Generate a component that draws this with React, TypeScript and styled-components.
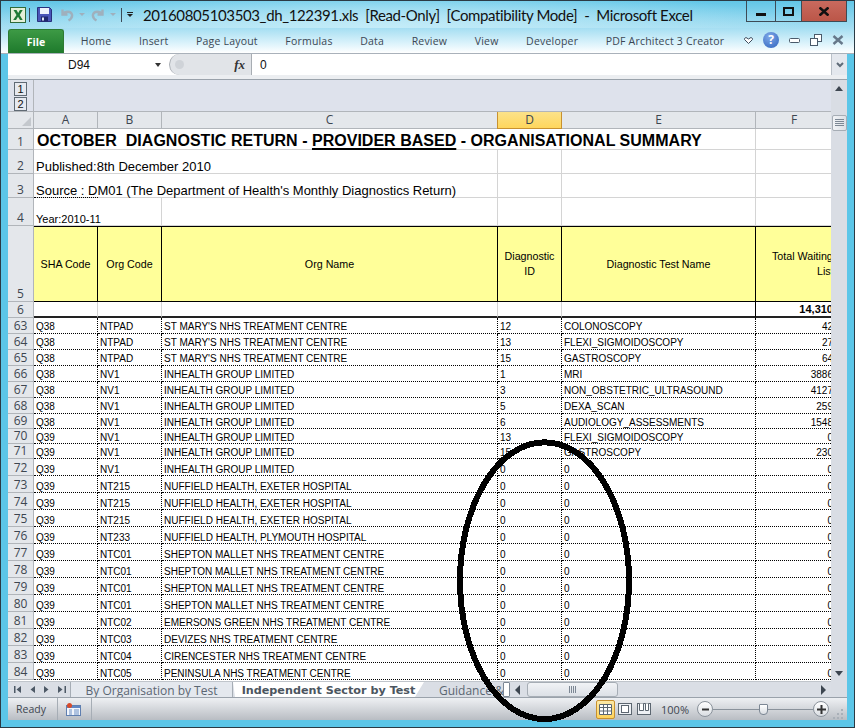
import styled, { createGlobalStyle } from 'styled-components'

type Row = [number, string, string, string, string, string, string]

const NTPAD = "ST MARY'S NHS TREATMENT CENTRE"
const NV1 = 'INHEALTH GROUP LIMITED'
const EXETER = 'NUFFIELD HEALTH, EXETER HOSPITAL'
const SHEPTON = 'SHEPTON MALLET NHS TREATMENT CENTRE'

const rows: Row[] = [
  [63, 'Q38', 'NTPAD', NTPAD, '12', 'COLONOSCOPY', '42'],
  [64, 'Q38', 'NTPAD', NTPAD, '13', 'FLEXI_SIGMOIDOSCOPY', '27'],
  [65, 'Q38', 'NTPAD', NTPAD, '15', 'GASTROSCOPY', '64'],
  [66, 'Q38', 'NV1', NV1, '1', 'MRI', '3886'],
  [67, 'Q38', 'NV1', NV1, '3', 'NON_OBSTETRIC_ULTRASOUND', '4127'],
  [68, 'Q38', 'NV1', NV1, '5', 'DEXA_SCAN', '259'],
  [69, 'Q38', 'NV1', NV1, '6', 'AUDIOLOGY_ASSESSMENTS', '1548'],
  [70, 'Q39', 'NV1', NV1, '13', 'FLEXI_SIGMOIDOSCOPY', '0'],
  [71, 'Q39', 'NV1', NV1, '15', 'GASTROSCOPY', '230'],
  [72, 'Q39', 'NV1', NV1, '0', '0', '0'],
  [73, 'Q39', 'NT215', EXETER, '0', '0', '0'],
  [74, 'Q39', 'NT215', EXETER, '0', '0', '0'],
  [75, 'Q39', 'NT215', EXETER, '0', '0', '0'],
  [76, 'Q39', 'NT233', 'NUFFIELD HEALTH, PLYMOUTH HOSPITAL', '0', '0', '0'],
  [77, 'Q39', 'NTC01', SHEPTON, '0', '0', '0'],
  [78, 'Q39', 'NTC01', SHEPTON, '0', '0', '0'],
  [79, 'Q39', 'NTC01', SHEPTON, '0', '0', '0'],
  [80, 'Q39', 'NTC01', SHEPTON, '0', '0', '0'],
  [81, 'Q39', 'NTC02', 'EMERSONS GREEN NHS TREATMENT CENTRE', '0', '0', '0'],
  [82, 'Q39', 'NTC03', 'DEVIZES NHS TREATMENT CENTRE', '0', '0', '0'],
  [83, 'Q39', 'NTC04', 'CIRENCESTER NHS TREATMENT CENTRE', '0', '0', '0'],
  [84, 'Q39', 'NTC05', 'PENINSULA NHS TREATMENT CENTRE', '0', '0', '0'],
]

const tabs = ['Home', 'Insert', 'Page Layout', 'Formulas', 'Data', 'Review', 'View', 'Developer', 'PDF Architect 3 Creator']

// rows are not all the same height in the sheet
const rowHeight = (num: number) => (num >= 72 ? 17 : num >= 69 ? 15 : 16)

export default function App() {
  return (
    <Window>
      <GlobalStyle />
      <TitleBar>
        <svg width="16" height="16" viewBox="0 0 16 16">
          <rect x="0.5" y="0.5" width="15" height="15" fill="#e4efd8" stroke="#2f6b3a" />
          <path d="M3.500 3h3l1.700 3 1.700-3h2.800l-3 5 3 5H10L8 9.800 6 13H3.200l3.300-5z" fill="#1f7a35" />
        </svg>
        <FirstSep />
        <SaveIcon width="15" height="15" viewBox="0 0 15 15">
          <path d="M.5.500h12l2 2v12H.5z" fill="#4a55b8" stroke="#27307c" />
          <rect x="3" y="1" width="9" height="6" fill="#eef2fb" />
          <rect x="4" y="9.500" width="7" height="5" fill="#20286e" />
          <rect x="5" y="10.500" width="2" height="3" fill="#dfe5f5" />
        </SaveIcon>
        <QuickIcon $first>
          <svg width="14" height="14" viewBox="0 0 14 14" fill="none" stroke="#9fb0bd" strokeWidth="2.400">
            <path d="M2.500 1.500v5h5M3 6.500C5 2.500 11 3 12 6.500c.5 2.500-1 4.500-3.500 6" />
          </svg>
          <Caret />
        </QuickIcon>
        <QuickIcon>
          <svg width="14" height="14" viewBox="0 0 14 14" fill="none" stroke="#9fb0bd" strokeWidth="2.400">
            <path d="M11.500 1.500v5h-5M11 6.500C9 2.500 3 3 2 6.500c-.5 2.500 1 4.500 3.500 6" />
          </svg>
          <Caret />
        </QuickIcon>
        <SecondSep />
        <CustomizeCaret />
        <TitleText>20160805103503_dh_122391.xls&nbsp; [Read-Only]&nbsp; [Compatibility Mode]&nbsp; -&nbsp; Microsoft Excel</TitleText>
        <Controls>
          <MinButton>
            <MinBar />
          </MinButton>
          <MaxButton>
            <svg width="11" height="9" viewBox="0 0 11 9" fill="none" stroke="#111" strokeWidth="2"><path d="M1 1h9v7H1z" /></svg>
          </MaxButton>
          <CloseButton>
            <svg width="10" height="9" viewBox="0 0 10 9" stroke="#111" strokeWidth="2.600"><path d="M.5.500l9 8M9.500.500l-9 8" /></svg>
          </CloseButton>
        </Controls>
      </TitleBar>

      <RibbonTabs>
        <FileTab>File</FileTab>
        {tabs.map((t) => (
          <RibbonTab key={t}>{t}</RibbonTab>
        ))}
        <RibbonTools>
          <svg width="9" height="7" viewBox="0 0 9 7" fill="#fff" stroke="#3d4b5c">
            <path d="M.5 1.500L2 .5l2.500 1.500L7 .5l1.500 1v1L4.500 6.500.5 2.500z" />
          </svg>
          <HelpIcon>?</HelpIcon>
          <svg width="11" height="5" viewBox="0 0 11 5"><rect x=".5" y=".5" width="10" height="4" rx="1" fill="#fff" stroke="#4b5a6a" /></svg>
          <svg width="12" height="12" viewBox="0 0 12 12" fill="#fff" stroke="#4b5a6a">
            <rect x="4.500" y=".5" width="7" height="7" />
            <rect x=".5" y="4.500" width="7" height="7" />
          </svg>
          <svg width="12" height="10" viewBox="0 0 12 10" fill="none" stroke="#66788a" strokeWidth="2.400"><path d="M1.500 1l9 8M10.500 1l-9 8" /></svg>
        </RibbonTools>
      </RibbonTabs>

      <FormulaBar>
        <NameBox>
          <NameValue>D94</NameValue>
          <DownCaret />
        </NameBox>
        <FxArea>
          <FxKnob />
          <FxLabel>fx</FxLabel>
        </FxArea>
        <FormulaValue>0</FormulaValue>
        <FormulaExpand>
          <svg width="8" height="6" viewBox="0 0 8 6" fill="none" stroke="#5f6b78" strokeWidth="2"><path d="M1 1l3 3 3-3" /></svg>
        </FormulaExpand>
      </FormulaBar>

      <Workbook>
        <SheetArea>
          <OutlineBar>
            <OutlineNums>
              <OutlineNum>1</OutlineNum>
              <OutlineNum>2</OutlineNum>
            </OutlineNums>
          </OutlineBar>
          <Sheet>
            <Corner />
            <ColHead>A</ColHead>
            <ColHead>B</ColHead>
            <ColHead>C</ColHead>
            <ColHead $active>D</ColHead>
            <ColHead>E</ColHead>
            <ColHead>F</ColHead>

            <RowNum $h={21}>1</RowNum>
            <TitleCell>
              OCTOBER&nbsp; DIAGNOSTIC RETURN - <u>PROVIDER BASED</u> - ORGANISATIONAL SUMMARY
            </TitleCell>
            <Cell />

            <RowNum $h={24}>2</RowNum>
            <SpanCell>Published:8th December 2010</SpanCell>
            <Cell />
            <Cell />
            <Cell />

            <RowNum $h={24}>3</RowNum>
            <SpanCell $dotted>Source : DM01 (The Department of Health's Monthly Diagnostics Return)</SpanCell>
            <Cell />
            <Cell />
            <Cell />

            <RowNum $h={28}>4</RowNum>
            <YearCell>Year:2010-11</YearCell>
            <Cell />
            <Cell />
            <Cell />
            <Cell />

            <RowNum $h={76}>5</RowNum>
            <HeadCell>SHA Code</HeadCell>
            <HeadCell>Org Code</HeadCell>
            <HeadCell>Org Name</HeadCell>
            <HeadCell>Diagnostic<br />ID</HeadCell>
            <HeadCell>Diagnostic Test Name</HeadCell>
            <WideHeadCell>
              <div>
                Total Waiting
                <ListLine>List</ListLine>
              </div>
            </WideHeadCell>

            <RowNum $h={16}>6</RowNum>
            <TotalBlank />
            <TotalBlank />
            <TotalBlank />
            <TotalBlank />
            <TotalBlank />
            <TotalCell>14,310</TotalCell>

            {rows.map((r) => (
              <DataRow key={r[0]} row={r} />
            ))}
          </Sheet>
          <TabStrip>
            <TabNav>
              <svg width="52" height="9" viewBox="0 0 52 9" fill="#4d5966">
                <path d="M0 1h1.500v7H0zM7 1v7L2.500 4.500zM21 1v7l-4.500-3.500zM30 1v7l4.500-3.500zM52 1h-1.500v7H52zM44 1v7l4.500-3.500z" />
              </svg>
            </TabNav>
            <SheetTab>By Organisation by Test</SheetTab>
            <ActiveSheetTab>Independent Sector by Test</ActiveSheetTab>
            <GuidanceTab>Guidance &amp; N</GuidanceTab>
            <TabSplit />
            <HScroll>
              <ScrollArrow $dir="left" />
              <HThumb>
                <svg width="8" height="7" viewBox="0 0 8 7" stroke="#7c8794"><path d="M.5 0v7M2.500 0v7M4.500 0v7M6.500 0v7" /></svg>
              </HThumb>
              <ScrollArrow $dir="right" />
            </HScroll>
          </TabStrip>
        </SheetArea>
        <VScroll>
          <VArrow $up />
          <VThumb>
            <svg width="9" height="8" viewBox="0 0 9 8" stroke="#7c8794"><path d="M0 .5h9M0 2.500h9M0 4.500h9M0 6.500h9" /></svg>
          </VThumb>
          <VArrow />
        </VScroll>
      </Workbook>

      <StatusBar>
        <StatusText>Ready</StatusText>
        <StatusSep />
        <svg width="15" height="13" viewBox="0 0 15 13">
          <rect x=".5" y="2.500" width="14" height="10" fill="#f2f6fc" stroke="#5f7fb0" />
          <rect x="1" y="3" width="13" height="2" fill="#5f86c4" />
          <path d="M3 7h3M8 7h5M3 9h3M8 9h5M3 11h3M8 11h5" stroke="#6a8fc4" />
          <circle cx="3.500" cy="2.500" r="2.500" fill="#d84a2a" />
        </svg>
        <StatusSepRight />
        <StatusRight>
          <ViewActive>
            <svg width="13" height="11" viewBox="0 0 13 11" fill="#fff" stroke="#5c6670">
              <path d="M.5.500h12v10H.5zM.5 3.500h12M.5 7h12M4.500.500v10M8.500.500v10" />
            </svg>
          </ViewActive>
          <ViewIcon>
            <svg width="14" height="12" viewBox="0 0 14 12" fill="#eef1f5" stroke="#5c6670">
              <rect x=".5" y=".5" width="13" height="11" />
              <rect x="3.500" y="2.500" width="7" height="7" fill="#fff" />
            </svg>
          </ViewIcon>
          <ViewIcon>
            <svg width="14" height="12" viewBox="0 0 14 12" fill="#eef1f5" stroke="#5c6670">
              <rect x=".5" y=".5" width="13" height="11" />
              <path d="M2.500.500v7h4v-7M8.500.500v7h3v-7" fill="#fff" />
            </svg>
          </ViewIcon>
          <ZoomText>100%</ZoomText>
          <ZoomButton>
            <svg width="9" height="9" viewBox="0 0 9 9" stroke="#333" strokeWidth="2"><path d="M1 4.500h7" /></svg>
          </ZoomButton>
          <SliderTrack>
            <SliderThumb />
          </SliderTrack>
          <ZoomButton>
            <svg width="9" height="9" viewBox="0 0 9 9" stroke="#333" strokeWidth="2"><path d="M0 4.500h9M4.500 0v9" /></svg>
          </ZoomButton>
          <Grip>
            <svg width="12" height="12" viewBox="0 0 12 12" fill="#a9b0b8">
              <path d="M9 1h2v2H9zM5 5h2v2H5zM9 5h2v2H9zM1 9h2v2H1zM5 9h2v2H5zM9 9h2v2H9z" />
            </svg>
          </Grip>
        </StatusRight>
      </StatusBar>

      <Ellipse width="182" height="286" viewBox="0 0 182 286" shapeRendering="crispEdges">
        <ellipse cx="90.500" cy="141.700" rx="84.500" ry="138.400" fill="none" stroke="#000" strokeWidth="6" />
      </Ellipse>
    </Window>
  )
}

function DataRow({ row }: { row: Row }) {
  const [num, sha, org, name, id, test, total] = row
  const h = rowHeight(num)
  return (
    <>
      <RowNum $h={h}>{num}</RowNum>
      <DataCell $h={h}>{sha}</DataCell>
      <DataCell $h={h}>{org}</DataCell>
      <DataCell $h={h}>{name}</DataCell>
      <DataCell $h={h}>{id}</DataCell>
      <DataCell $h={h}>{test}</DataCell>
      <TotalValue $h={h}>{total}</TotalValue>
    </>
  )
}

const GlobalStyle = createGlobalStyle`
  html, body {
    margin: 0;
    padding: 0;
    background: #5cc6e8;
  }
  * {
    box-sizing: border-box;
  }
`

const Window = styled.div`
  position: relative;
  width: 855px;
  height: 728px;
  overflow: hidden;
  border: 1px solid #2b3a44;
  display: flex;
  flex-direction: column;
  font-family: 'Open Sans', sans-serif;
  background: #5cc6e8;
`

const TitleBar = styled.div`
  height: 27px;
  flex: none;
  display: flex;
  align-items: center;
  padding-left: 9px;
  background: radial-gradient(ellipse 420px 40px at 45% 100%, #c4ecf8, transparent), linear-gradient(180deg, #62c6e7, #a5def2);
`

const FirstSep = styled.div`
  width: 1px;
  height: 14px;
  background: #3c4a56;
  margin-left: 3px;
`

const SaveIcon = styled.svg`
  margin-left: 7px;
`

const QuickIcon = styled.div<{ $first?: boolean }>`
  display: flex;
  align-items: center;
  gap: 5px;
  margin-left: ${(p) => (p.$first ? '8px' : '6px')};
`

const Caret = styled.div`
  width: 0;
  height: 0;
  border: 3px solid transparent;
  border-top: 3px solid #9fb0bd;
  border-bottom: 0;
`

const SecondSep = styled(FirstSep)`
  margin-left: 5px;
`

const CustomizeCaret = styled.div`
  width: 6px;
  height: 5px;
  margin-left: 5px;
  border-top: 1px solid #222;
  position: relative;
  &::after {
    content: '';
    position: absolute;
    top: 1px;
    left: 0;
    border: 3px solid transparent;
    border-top: 3px solid #222;
    border-bottom: 0;
  }
`

const TitleText = styled.div`
  font-family: 'Lato', sans-serif;
  font-size: 15px;
  letter-spacing: -0.37px;
  color: #111;
  white-space: nowrap;
  margin-left: 10px;
`

const Controls = styled.div`
  position: absolute;
  top: 0;
  right: 7px;
  display: flex;
`

const ControlButton = styled.div`
  height: 21px;
  border: 1px solid #3d4a55;
  border-top: 0;
  margin-right: -1px;
  display: flex;
  align-items: center;
  justify-content: center;
`

const MinButton = styled(ControlButton)`
  width: 30px;
`

const MinBar = styled.div`
  width: 10px;
  height: 3px;
  margin-top: 6px;
  background: #111;
`

const MaxButton = styled(ControlButton)`
  width: 27px;
`

const CloseButton = styled(ControlButton)`
  width: 46px;
  margin-right: 0;
  background: linear-gradient(180deg, #c96a5e, #bb5648);
`

const RibbonTabs = styled.div`
  height: 26px;
  flex: none;
  display: flex;
  align-items: stretch;
  padding: 0 0 1px 7px;
  position: relative;
  background: linear-gradient(180deg, #a5def2, #dcf3fb 60%, #fff 96%, #a9b1ba 96%);
`

const FileTab = styled.div`
  width: 56px;
  margin: 1px 3px 0 0;
  border: 1px solid #2d7a32;
  border-bottom: 0;
  border-radius: 3px 3px 0 0;
  background: linear-gradient(180deg, #3d9a45, #1e7a2c);
  color: #fff;
  font-size: 10.500px;
  font-weight: 700;
  display: flex;
  align-items: center;
  justify-content: center;
`

const RibbonTab = styled.div`
  padding: 0 13.800px;
  font-size: 10.500px;
  letter-spacing: 0.2px;
  color: #3b4754;
  display: flex;
  align-items: center;
  white-space: nowrap;
`

const RibbonTools = styled.div`
  position: absolute;
  right: 10px;
  top: 4px;
  height: 16px;
  display: flex;
  align-items: center;
  gap: 10px;
`

const HelpIcon = styled.div`
  width: 16px;
  height: 16px;
  border-radius: 50%;
  background: radial-gradient(circle at 40% 30%, #7fa9e8, #2d62bd);
  color: #fff;
  font-size: 12px;
  font-weight: 700;
  text-align: center;
  line-height: 16px;
`

const FormulaBar = styled.div`
  height: 25px;
  flex: none;
  margin: 0 7px;
  background: #fff;
  display: flex;
  align-items: stretch;
  font-size: 12px;
  border-bottom: 4px solid #eceef1;
  font-family: 'Liberation Sans', sans-serif;
`

const NameBox = styled.div`
  width: 161px;
  display: flex;
  align-items: center;
  justify-content: center;
  position: relative;
`

const NameValue = styled.span`
  margin-left: -19px;
  color: #111;
`

const DownCaret = styled.div`
  position: absolute;
  right: 8px;
  top: 9px;
  border: 3.500px solid transparent;
  border-top: 4px solid #333;
  border-bottom: 0;
`

const FxArea = styled.div`
  width: 83px;
  display: flex;
  align-items: center;
  justify-content: flex-end;
  padding-right: 6px;
  background: #e1e4e8;
  border-radius: 11px 0 0 11px;
  border-left: 1px solid #a8adb3;
  border-right: 1px solid #a8adb3;
  position: relative;
`

const FxKnob = styled.div`
  position: absolute;
  left: 5px;
  top: 6px;
  width: 9px;
  height: 9px;
  border-radius: 50%;
  background: #cfd3d8;
`

const FxLabel = styled.span`
  font-family: 'Liberation Serif', serif;
  font-style: italic;
  font-weight: 700;
  font-size: 13px;
  color: #333;
`

const FormulaValue = styled.div`
  flex: 1;
  padding-left: 8px;
  display: flex;
  align-items: center;
  color: #111;
`

const FormulaExpand = styled.div`
  width: 16px;
  background: #e4e8ee;
  border-left: 1px solid #b9c0c8;
  display: flex;
  align-items: center;
  justify-content: center;
`

const Workbook = styled.div`
  flex: 1;
  min-height: 0;
  margin: 0 7px;
  border-top: 1px solid #9aa2ab;
  display: flex;
`

const SheetArea = styled.div`
  width: 823px;
  flex: none;
  display: flex;
  flex-direction: column;
  min-height: 0;
`

const OutlineBar = styled.div`
  height: 32px;
  flex: none;
  background: #dee2ec;
  display: flex;
  border-bottom: 1px solid #b1b5ba;
`

const OutlineNums = styled.div`
  width: 26px;
  border-right: 1px solid #b1b5ba;
  background: #dee2ec;
  padding: 2px 6px 0 6px;
`

const OutlineNum = styled.div`
  height: 14px;
  border: 1px solid #606a74;
  font: 11px/12px 'Liberation Sans', sans-serif;
  color: #111;
  text-align: center;
  background: #e6e9f0;
  & + & {
    margin-top: 1px;
  }
`

const Sheet = styled.div`
  flex: 1;
  min-height: 0;
  overflow: hidden;
  display: grid;
  grid-template-columns: 26px 64px 64px 336px 64px 194px 77px;
  grid-auto-rows: max-content;
  font-family: 'Liberation Sans', sans-serif;
  background: #fff;
`

const Corner = styled.div`
  height: 17px;
  background: #e4e7eb;
  border-right: 1px solid #b1b5ba;
  border-bottom: 1px solid #b1b5ba;
  position: relative;
  &::after {
    content: '';
    position: absolute;
    right: 2px;
    bottom: 2px;
    border-left: 9px solid transparent;
    border-bottom: 9px solid #c4c8cd;
  }
`

const ColHead = styled.div<{ $active?: boolean }>`
  height: 17px;
  border-right: 1px solid ${(p) => (p.$active ? '#c8912f' : '#b1b5ba')};
  border-bottom: 1px solid ${(p) => (p.$active ? '#c8912f' : '#b1b5ba')};
  border-left: ${(p) => (p.$active ? '1px solid #c8912f' : '0')};
  margin-left: ${(p) => (p.$active ? '-1px' : '0')};
  background: ${(p) => (p.$active ? 'linear-gradient(180deg, #fbe28a, #ffd65c)' : '#e4e7eb')};
  font-family: 'Open Sans', sans-serif;
  font-size: 12px;
  line-height: 16px;
  color: #3d4650;
  text-align: center;
`

const RowNum = styled.div<{ $h: number }>`
  height: ${(p) => p.$h}px;
  background: #e4e7eb;
  border-right: 1px solid #b1b5ba;
  border-bottom: 1px solid #b1b5ba;
  font-family: 'Open Sans', sans-serif;
  font-size: 12px;
  color: #3d4650;
  text-align: center;
  display: flex;
  align-items: flex-end;
  justify-content: center;
  line-height: 14px;
  overflow: hidden;
`

const Cell = styled.div`
  border-right: 1px solid #d4d4d4;
  border-bottom: 1px solid #d4d4d4;
  white-space: nowrap;
  color: #000;
  min-width: 0;
`

const TitleCell = styled(Cell)`
  grid-column: span 5;
  font-size: 16px;
  font-weight: 700;
  line-height: 17px;
  padding: 3px 0 0 3px;
  letter-spacing: 0.02px;
  u {
    text-decoration-thickness: 2px;
    text-underline-offset: 2px;
  }
`

const SpanCell = styled(Cell)<{ $dotted?: boolean }>`
  grid-column: span 3;
  font-size: 13px;
  line-height: 12px;
  padding: 11px 0 0 2px;
  position: relative;
  ${(p) =>
    p.$dotted &&
    `&::after {
      content: '';
      position: absolute;
      left: 0;
      bottom: -1px;
      width: 64px;
      border-bottom: 1px dotted #000;
    }`}
`

const YearCell = styled(Cell)`
  grid-column: span 2;
  font-size: 11px;
  line-height: 11px;
  padding: 16px 0 0 2px;
`

const HeadCell = styled.div`
  background: #ffff99;
  border-top: 1px solid #000;
  border-right: 1px solid #000;
  border-bottom: 1px solid #000;
  font-size: 10.700px;
  line-height: 15px;
  display: flex;
  align-items: center;
  justify-content: center;
  text-align: center;
  color: #000;
`

const WideHeadCell = styled(HeadCell)`
  width: 104px;
  justify-content: flex-start;
  text-align: left;
  padding-left: 16px;
  white-space: nowrap;
`

const ListLine = styled.div`
  padding-left: 45px;
`

const TotalBlank = styled.div`
  border-right: 1px solid #d4d4d4;
  border-bottom: 2px solid #222;
`

const TotalCell = styled.div`
  border-bottom: 2px solid #222;
  border-left: 1px solid #000;
  font-size: 11px;
  font-weight: 700;
  text-align: right;
  line-height: 14px;
  margin-left: -1px;
`

const DataCell = styled.div<{ $h: number }>`
  border-right: 1px dotted #000;
  border-bottom: 1px dotted #000;
  font-size: 10px;
  line-height: 10px;
  padding: ${(p) => (p.$h === 17 ? 6 : 4)}px 2px 0;
  white-space: nowrap;
  overflow: hidden;
  color: #000;
`

const TotalValue = styled(DataCell)`
  border-right: 0;
  padding-right: 0;
  text-align: right;
`

const TabStrip = styled.div`
  height: 16px;
  flex: none;
  display: flex;
  align-items: stretch;
  background: #dadee5;
  border-top: 1px solid #c0c5cb;
  font-size: 12px;
  overflow: hidden;
`

const TabNav = styled.div`
  width: 62px;
  flex: none;
  display: flex;
  align-items: center;
  padding-left: 6px;
`

const SheetTab = styled.div`
  width: 163px;
  flex: none;
  text-align: center;
  color: #5b6672;
  line-height: 17px;
  background: #e4e8ee;
  border-right: 1px solid #a6adb5;
  border-left: 1px solid #a6adb5;
  white-space: nowrap;
`

const ActiveSheetTab = styled(SheetTab)`
  width: 191px;
  background: #fff;
  font-family: 'DejaVu Sans', sans-serif;
  font-weight: 700;
  font-size: 11.200px;
  color: #4b5560;
  border: 0;
  clip-path: polygon(0 0, 100% 0, calc(100% - 9px) 100%, 2px 100%);
`

const GuidanceTab = styled(SheetTab)`
  width: 79px;
  overflow: hidden;
  text-align: left;
  padding-left: 15px;
  border: 0;
  background: transparent;
`

const TabSplit = styled.div`
  width: 7px;
  flex: none;
  background: #fff;
  border: 1px solid #7c8794;
  border-radius: 1px;
`

const HScroll = styled.div`
  flex: 1;
  display: flex;
  align-items: center;
  padding: 0 5px;
`

const ScrollArrow = styled.div<{ $dir: 'left' | 'right' }>`
  border: 5px solid transparent;
  ${(p) =>
    p.$dir === 'left'
      ? 'border-right: 5px solid #3d4650; border-left: 0;'
      : 'border-left: 5px solid #3d4650; border-right: 0; margin-left: auto;'}
`

const HThumb = styled.div`
  width: 91px;
  height: 15px;
  margin-left: 7px;
  border: 1px solid #a6adb5;
  border-radius: 3px;
  background: linear-gradient(180deg, #f1f3f6, #dce0e6);
  display: flex;
  align-items: center;
  justify-content: center;
`

const VScroll = styled.div`
  width: 16px;
  flex: none;
  background: #d9dde4;
  display: flex;
  flex-direction: column;
  align-items: center;
  padding-top: 6px;
`

const VArrow = styled.div<{ $up?: boolean }>`
  border: 4.500px solid transparent;
  ${(p) =>
    p.$up
      ? 'border-bottom: 5px solid #3d4650; border-top: 0;'
      : 'border-top: 5px solid #3d4650; border-bottom: 0; margin-top: auto; margin-bottom: 21px;'}
`

const VThumb = styled.div`
  width: 15px;
  height: 16px;
  margin-top: 24px;
  border: 1px solid #a6adb5;
  border-radius: 2px;
  background: linear-gradient(90deg, #f1f3f6, #dce0e6);
  display: flex;
  align-items: center;
  justify-content: center;
`

const StatusBar = styled.div`
  height: 23px;
  flex: none;
  margin: 0 7px 7px;
  background: linear-gradient(180deg, #eef0f3, #b9bdc3);
  border-top: 1px solid #9aa2ab;
  display: flex;
  align-items: center;
  font-size: 10.500px;
  color: #3d4650;
`

const StatusText = styled.div`
  width: 49px;
  padding-left: 8px;
`

const StatusSep = styled.div`
  width: 1px;
  align-self: stretch;
  background: #a6adb5;
  margin-right: 8px;
`

const StatusSepRight = styled(StatusSep)`
  margin: 0 0 0 10px;
`

const StatusRight = styled.div`
  margin-left: auto;
  display: flex;
  align-items: center;
  height: 100%;
`

const ViewActive = styled.div`
  width: 19px;
  height: 19px;
  border: 1px solid #c8912f;
  border-radius: 2px;
  background: linear-gradient(180deg, #fde9a6, #ffd35a);
  display: flex;
  align-items: center;
  justify-content: center;
`

const ViewIcon = styled.div`
  width: 19px;
  display: flex;
  align-items: center;
  justify-content: center;
`

const ZoomText = styled.div`
  width: 36px;
  margin-right: 8px;
  font-size: 11px;
  text-align: right;
`

const ZoomButton = styled.div`
  width: 16px;
  height: 16px;
  border: 1px solid #8a929b;
  border-radius: 50%;
  background: linear-gradient(180deg, #fff, #d9dde2);
  display: flex;
  align-items: center;
  justify-content: center;
`

const SliderTrack = styled.div`
  width: 100px;
  height: 1px;
  background: #8a929b;
  position: relative;
`

const SliderThumb = styled.div`
  position: absolute;
  left: 46px;
  top: -5px;
  width: 9px;
  height: 11px;
  background: linear-gradient(180deg, #fff, #d9dde2);
  border: 1px solid #7c8794;
  border-radius: 1px 1px 4px 4px;
`

const Grip = styled.div`
  width: 18px;
  display: flex;
  justify-content: center;
  align-self: flex-end;
`

const Ellipse = styled.svg`
  position: absolute;
  left: 453px;
  top: 438px;
`
